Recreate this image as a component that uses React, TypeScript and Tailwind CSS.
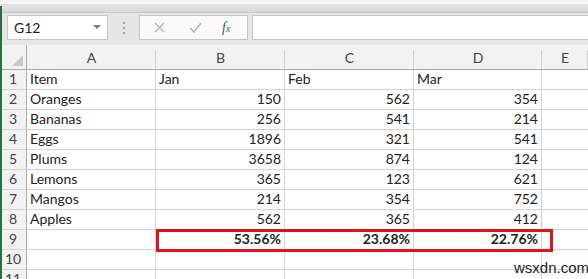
import React from "react";

const rows: [string, string, string, string][] = [
  ["Item", "Jan", "Feb", "Mar"],
  ["Oranges", "150", "562", "354"],
  ["Bananas", "256", "541", "214"],
  ["Eggs", "1896", "321", "541"],
  ["Plums", "3658", "874", "124"],
  ["Lemons", "365", "123", "621"],
  ["Mangos", "214", "354", "752"],
  ["Apples", "562", "365", "412"],
  ["", "53.56%", "23.68%", "22.76%"],
  ["", "", "", ""],
  ["", "", "", ""],
];

const font = { fontFamily: "Lato, 'Noto Sans', sans-serif" };

export default function App() {
  return (
    <div className="relative w-[588px] h-[279px] overflow-hidden bg-white text-[#222]" style={font}>
      {/* green edge */}
      <div className="absolute left-0 top-[6px] bottom-0 w-[2px] bg-[#217346] z-10" />
      {/* top strip */}
      <div className="h-[4px] bg-[#f3f3f3]" />
      <div className="h-[9px] bg-gradient-to-b from-[#e4e4e4] to-[#dadada] border-b border-[#c6c6c6]" />
      {/* formula bar */}
      <div className="h-[32px] bg-[#e6e6e6] flex items-start pt-[2px] pl-[7px]">
        <div className="w-[101px] h-[25px] bg-white border border-[#c6c6c6] flex items-center justify-between pl-[6px] pr-[6px]">
          <span className="text-[14px] text-[#222]">G12</span>
          <svg width="8" height="5" viewBox="0 0 8 5"><path d="M0 0 L8 0 L4 4 Z" fill="#7a7a7a" /></svg>
        </div>
        <div className="w-[31px] h-[25px] flex flex-col items-center justify-center gap-[3px]">
          <span className="w-[2px] h-[2px] bg-[#a6a6a6]" />
          <span className="w-[2px] h-[2px] bg-[#a6a6a6]" />
          <span className="w-[2px] h-[2px] bg-[#a6a6a6]" />
        </div>
        <div className="w-[109px] h-[25px] bg-[#fafafa] border border-[#c6c6c6] flex items-center">
          <svg className="ml-[14px]" width="11" height="11" viewBox="0 0 11 11"><path d="M1 1 L10 10 M10 1 L1 10" stroke="#b5b5b5" strokeWidth="1.4" /></svg>
          <svg className="ml-[24px]" width="13" height="11" viewBox="0 0 13 11"><path d="M1 6 L5 10 L12 1" stroke="#b5b5b5" strokeWidth="1.6" fill="none" /></svg>
          <span className="ml-[20px] text-[14px] italic text-[#555]" style={{ fontFamily: "'Liberation Serif', serif" }}>f<span className="text-[10px]">x</span></span>
        </div>
        <div className="ml-[4px] flex-1 h-[25px] bg-white border border-[#c6c6c6] border-r-0" />
      </div>
      {/* grid */}
      <div className="grid grid-cols-[27px_129px_129px_129px_128px_1fr]">
        {/* header */}
        <div className="h-[25px] bg-[#f2f2f2] border-r border-b border-[#ababab] relative">
          <svg className="absolute right-[3px] bottom-[3px]" width="11" height="11" viewBox="0 0 11 11"><path d="M11 0 L11 11 L0 11 Z" fill="#c9c9c9" /></svg>
        </div>
        {["A", "B", "C", "D", "E"].map((c) => (
          <div key={c} className="h-[25px] bg-[#f2f2f2] border-b border-[#ababab] relative flex items-center justify-center text-[14px] text-[#444]">
            <span className="absolute right-0 top-[5px] bottom-0 w-px bg-[#d0d0d0]" />
            {c}
          </div>
        ))}
        {rows.map((r, i) => (
          <React.Fragment key={i}>
            <div className="h-[20px] bg-[#f2f2f2] border-r border-b border-r-[#ababab] border-b-[#d4d4d4] flex items-end justify-center pb-[1px] text-[14px] text-[#444] leading-none">
              <span className="pb-[2px]">{i + 1}</span>
            </div>
            {r.map((v, j) => (
              <div
                key={j}
                className={`h-[20px] border-r border-b border-[#d4d4d4] flex items-end px-[3px] pb-[3px] text-[14px] leading-none whitespace-nowrap ${
                  j === 0 || i === 0 ? "justify-start" : "justify-end"
                } ${i === 8 ? "font-bold" : ""}`}
              >
                {v}
              </div>
            ))}
            <div className="h-[20px] border-b border-[#d4d4d4]" />
          </React.Fragment>
        ))}
      </div>
      {/* red highlight */}
      <div className="absolute left-[156px] top-[229px] w-[397px] h-[23px] border-[3px] border-[#e0121a]" />
      {/* watermark */}
      <div className="absolute left-[514px] top-[257px] text-[15px] text-[#222]" style={{ fontFamily: "'Liberation Sans', sans-serif" }}>
        wsxdn.com
      </div>
    </div>
  );
}
